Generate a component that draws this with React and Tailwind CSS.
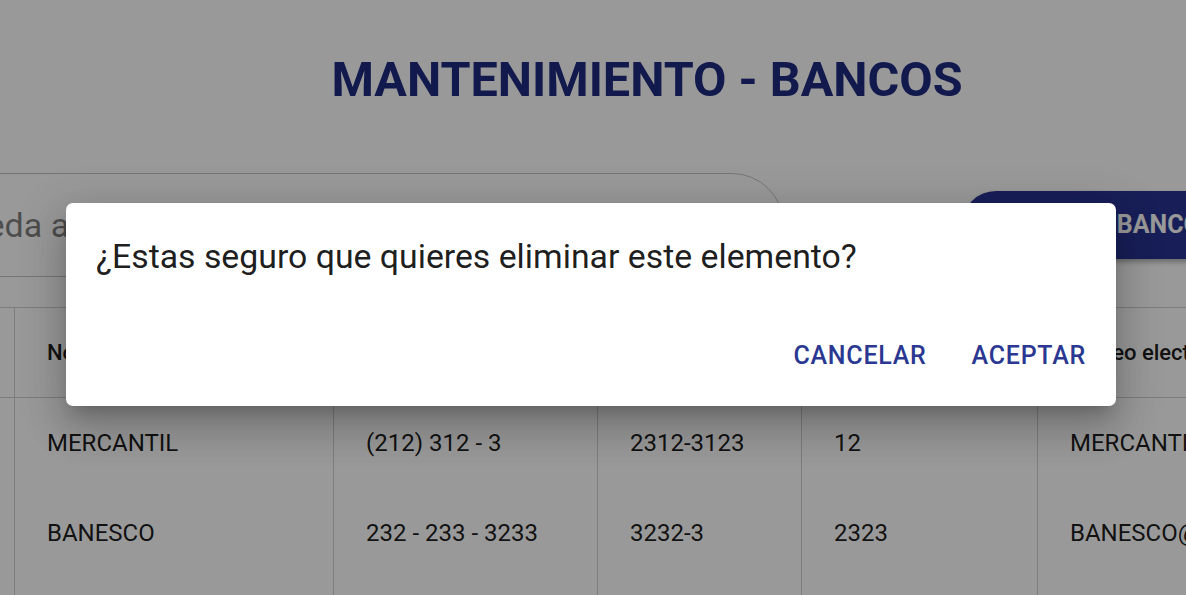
import React from "react";

const rows = [
  ["MERCANTIL", "(212) 312 - 3", "2312-3123", "12", "MERCANTIL@gmail.com"],
  ["BANESCO", "232 - 233 - 3233", "3232-3", "2323", "BANESCO@gmail.com"],
  ["", "", "", "", ""],
];

export default function App() {
  return (
    <div className="relative w-[1186px] h-[595px] overflow-hidden bg-white font-['Roboto','Liberation_Sans',sans-serif]">
      {/* Page */}
      <div className="flex flex-col">
        <h1 className="pt-[52px] pl-[108px] text-center text-[48.5px] leading-[56px] font-bold text-[#1f2a80] whitespace-nowrap">
          MANTENIMIENTO - BANCOS
        </h1>

        <div className="mt-[65px] flex items-center">
          <div className="ml-[-220px] w-[1004px] h-[104px] shrink-0 rounded-[52px] border border-[#c4c4c4] flex items-center pl-[110px]">
            <span className="text-[34px] text-black/50 whitespace-nowrap">Búsqueda avanzada</span>
          </div>
          <div className="ml-[178px] h-[68px] shrink-0 rounded-full bg-[#283593] flex items-center pl-[67px] pr-[40px] shadow-[0_3px_5px_rgba(0,0,0,0.3)]">
            <span className="text-[25px] font-bold text-white whitespace-nowrap">NUEVO BANCO</span>
          </div>
        </div>

        <div className="mt-[30px] ml-[-100px] w-[1450px]">
          <div className="flex h-[91px] border-t border-b border-[#d0d0d0] text-[22px] font-medium text-black/90">
            <div className="w-[115px] shrink-0 border-r border-[#d0d0d0]" />
            <div className="w-[319px] shrink-0 border-r border-[#d0d0d0] pl-[32px] flex items-center">Nombre</div>
            <div className="w-[264px] shrink-0 border-r border-[#d0d0d0] pl-[32px] flex items-center">Teléfono</div>
            <div className="w-[204px] shrink-0 border-r border-[#d0d0d0] pl-[32px] flex items-center">Cuenta</div>
            <div className="w-[236px] shrink-0 border-r border-[#d0d0d0] pl-[32px] flex items-center">Código</div>
            <div className="flex-1 pl-[32px] flex items-center">Correo electrónico</div>
          </div>
          {rows.map((r, i) => (
            <div key={i} className="flex h-[90px] text-[24px] text-black/90">
              <div className="w-[115px] shrink-0 border-r border-[#d0d0d0]" />
              <div className="w-[319px] shrink-0 border-r border-[#d0d0d0] pl-[32px] flex items-center">{r[0]}</div>
              <div className="w-[264px] shrink-0 border-r border-[#d0d0d0] pl-[32px] flex items-center">{r[1]}</div>
              <div className="w-[204px] shrink-0 border-r border-[#d0d0d0] pl-[32px] flex items-center">{r[2]}</div>
              <div className="w-[236px] shrink-0 border-r border-[#d0d0d0] pl-[32px] flex items-center">{r[3]}</div>
              <div className="flex-1 pl-[32px] flex items-center">{r[4]}</div>
            </div>
          ))}
        </div>
      </div>

      {/* Overlay */}
      <div className="absolute inset-0 bg-black/40" />

      {/* Dialog */}
      <div className="absolute left-[66px] top-[203px] w-[1050px] h-[203px] bg-white rounded-[7px] shadow-[0_11px_15px_-7px_rgba(0,0,0,0.2),0_24px_38px_3px_rgba(0,0,0,0.14),0_9px_46px_8px_rgba(0,0,0,0.12)] flex flex-col">
        <p className="pt-[34px] pl-[30px] text-[33.8px] leading-[40px] text-black/90 whitespace-nowrap">
          ¿Estas seguro que quieres eliminar este elemento?
        </p>
        <div className="mt-auto mb-[34px] flex justify-end gap-[45px] pr-[30px]">
          <span className="text-[25px] leading-[32px] font-medium tracking-[0.03em] text-[#2a3892]">CANCELAR</span>
          <span className="text-[25px] leading-[32px] font-medium tracking-[0.03em] text-[#2a3892]">ACEPTAR</span>
        </div>
      </div>
    </div>
  );
}
